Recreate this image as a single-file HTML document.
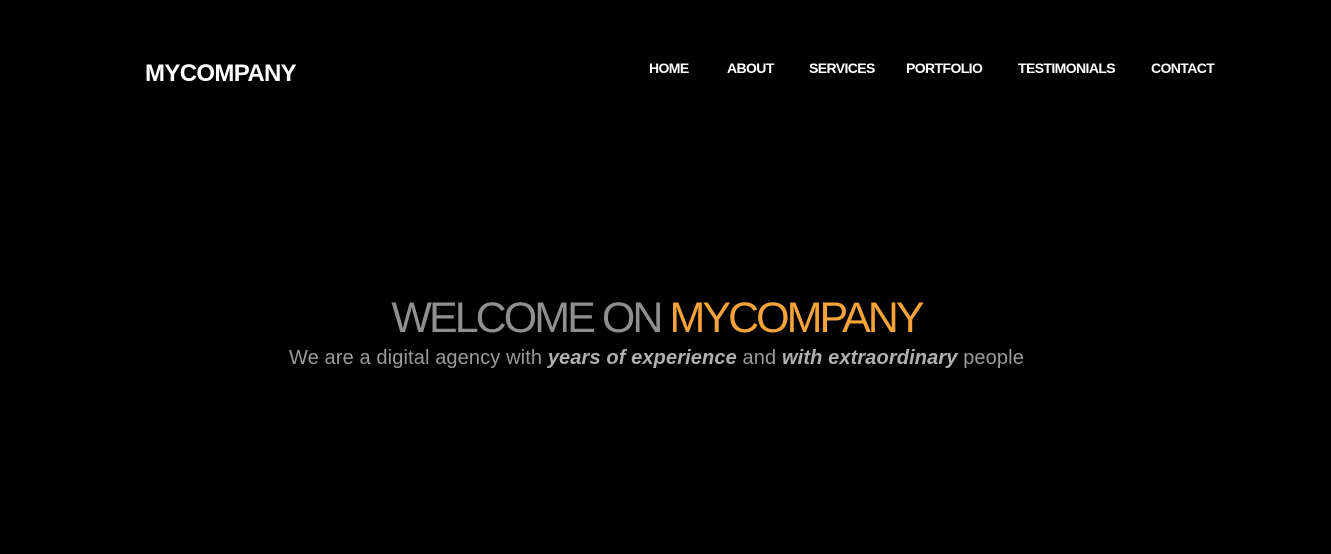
<!DOCTYPE html>
<html><head><style>
body{margin:0;width:1331px;height:554px;background:#000;font-family:"Liberation Sans",sans-serif;position:relative;overflow:hidden}
.logo{position:absolute;left:145px;top:59px;color:#fff;font-weight:bold;font-size:24px;letter-spacing:-0.65px;line-height:30px}
.nav a{position:absolute;top:60px;color:#fff;font-weight:bold;font-size:14px;letter-spacing:-0.6px;text-decoration:none;line-height:16px}
h1{position:absolute;left:0;width:1313px;top:293px;margin:0;text-align:center;font-weight:normal;font-size:43px;letter-spacing:-2.95px;color:#8f8f8f;line-height:50px}
h1 span{color:#f6a43a}
p{position:absolute;left:0;width:1313px;top:345px;margin:0;text-align:center;font-size:20px;color:#9a9a9a;line-height:26px;letter-spacing:0.12px}
p b{font-style:italic;color:#b0b0b0}
</style></head><body>
<div class="logo">MYCOMPANY</div>
<div class="nav">
<a style="left:649px">HOME</a>
<a style="left:727px">ABOUT</a>
<a style="left:809px">SERVICES</a>
<a style="left:906px">PORTFOLIO</a>
<a style="left:1018px">TESTIMONIALS</a>
<a style="left:1151px">CONTACT</a>
</div>
<h1>WELCOME ON <span>MYCOMPANY</span></h1>
<p>We are a digital agency with <b>years of experience</b> and <b>with extraordinary</b> people</p>
</body></html>
